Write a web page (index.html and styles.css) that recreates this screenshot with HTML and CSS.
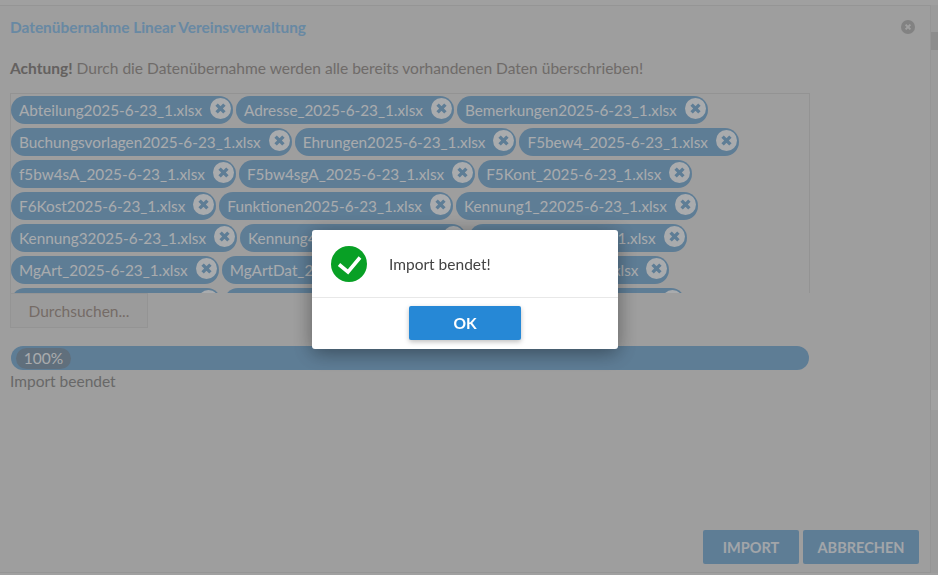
FILE: index.html
```html
<!DOCTYPE html>
<html lang="de">
<head>
    <meta charset="UTF-8">
    <meta name="viewport" content="width=device-width, initial-scale=1.0">
    <title>Datenübernahme</title>
    <link rel="stylesheet" href="styles.css">
</head>
<body>
    <div class="window">
        <div class="window-head">
            <h1>Datenübernahme Linear Vereinsverwaltung</h1>
            <span class="close-icon">
                <svg viewBox="0 0 14 14" width="14" height="14"><circle cx="7" cy="7" r="7" fill="currentColor"/><path d="M4.6 4.6l4.8 4.8M9.4 4.6l-4.8 4.8" stroke="#e6e6e6" stroke-width="2" fill="none"/></svg>
            </span>
        </div>
        <p class="warning"><b>Achtung!</b> Durch die Datenübernahme werden alle bereits vorhandenen Daten überschrieben!</p>

        <div class="file-list">
            <div class="file-row">
                <span class="chip">Abteilung2025-6-23_1.xlsx<i class="chip-x"><svg viewBox="0 0 10 10"><path d="M2 2l6 6M8 2l-6 6"/></svg></i></span>
                <span class="chip">Adresse_2025-6-23_1.xlsx<i class="chip-x"><svg viewBox="0 0 10 10"><path d="M2 2l6 6M8 2l-6 6"/></svg></i></span>
                <span class="chip">Bemerkungen2025-6-23_1.xlsx<i class="chip-x"><svg viewBox="0 0 10 10"><path d="M2 2l6 6M8 2l-6 6"/></svg></i></span>
            </div>
            <div class="file-row">
                <span class="chip">Buchungsvorlagen2025-6-23_1.xlsx<i class="chip-x"><svg viewBox="0 0 10 10"><path d="M2 2l6 6M8 2l-6 6"/></svg></i></span>
                <span class="chip">Ehrungen2025-6-23_1.xlsx<i class="chip-x"><svg viewBox="0 0 10 10"><path d="M2 2l6 6M8 2l-6 6"/></svg></i></span>
                <span class="chip">F5bew4_2025-6-23_1.xlsx<i class="chip-x"><svg viewBox="0 0 10 10"><path d="M2 2l6 6M8 2l-6 6"/></svg></i></span>
            </div>
            <div class="file-row">
                <span class="chip">f5bw4sA_2025-6-23_1.xlsx<i class="chip-x"><svg viewBox="0 0 10 10"><path d="M2 2l6 6M8 2l-6 6"/></svg></i></span>
                <span class="chip">F5bw4sgA_2025-6-23_1.xlsx<i class="chip-x"><svg viewBox="0 0 10 10"><path d="M2 2l6 6M8 2l-6 6"/></svg></i></span>
                <span class="chip">F5Kont_2025-6-23_1.xlsx<i class="chip-x"><svg viewBox="0 0 10 10"><path d="M2 2l6 6M8 2l-6 6"/></svg></i></span>
            </div>
            <div class="file-row">
                <span class="chip">F6Kost2025-6-23_1.xlsx<i class="chip-x"><svg viewBox="0 0 10 10"><path d="M2 2l6 6M8 2l-6 6"/></svg></i></span>
                <span class="chip">Funktionen2025-6-23_1.xlsx<i class="chip-x"><svg viewBox="0 0 10 10"><path d="M2 2l6 6M8 2l-6 6"/></svg></i></span>
                <span class="chip">Kennung1_22025-6-23_1.xlsx<i class="chip-x"><svg viewBox="0 0 10 10"><path d="M2 2l6 6M8 2l-6 6"/></svg></i></span>
            </div>
            <div class="file-row">
                <span class="chip">Kennung32025-6-23_1.xlsx<i class="chip-x"><svg viewBox="0 0 10 10"><path d="M2 2l6 6M8 2l-6 6"/></svg></i></span>
                <span class="chip">Kennung42025-6-23_1.xlsx<i class="chip-x"><svg viewBox="0 0 10 10"><path d="M2 2l6 6M8 2l-6 6"/></svg></i></span>
                <span class="chip">Kontakt_2025-6-23_1.xlsx<i class="chip-x"><svg viewBox="0 0 10 10"><path d="M2 2l6 6M8 2l-6 6"/></svg></i></span>
            </div>
            <div class="file-row">
                <span class="chip">MgArt_2025-6-23_1.xlsx<i class="chip-x"><svg viewBox="0 0 10 10"><path d="M2 2l6 6M8 2l-6 6"/></svg></i></span>
                <span class="chip">MgArtDat_2025-6-23_1.xlsx<i class="chip-x"><svg viewBox="0 0 10 10"><path d="M2 2l6 6M8 2l-6 6"/></svg></i></span>
                <span class="chip">Mitglied2025-6-23_1.xlsx<i class="chip-x"><svg viewBox="0 0 10 10"><path d="M2 2l6 6M8 2l-6 6"/></svg></i></span>
            </div>
            <div class="file-row">
                <span class="chip">MgKurs2025-6-23_1.xlsx<i class="chip-x"><svg viewBox="0 0 10 10"><path d="M2 2l6 6M8 2l-6 6"/></svg></i></span>
                <span class="chip">Mitgliedsdat2025-6-23_1.xlsx<i class="chip-x"><svg viewBox="0 0 10 10"><path d="M2 2l6 6M8 2l-6 6"/></svg></i></span>
                <span class="chip">Notizen_2025-6-23_1.xlsx<i class="chip-x"><svg viewBox="0 0 10 10"><path d="M2 2l6 6M8 2l-6 6"/></svg></i></span>
            </div>
        </div>

        <button type="button" class="browse-button">Durchsuchen...</button>

        <div class="progress">
            <span class="progress-label">100%</span>
        </div>
        <div class="status">Import beendet</div>

        <div class="window-foot">
            <button type="button" class="action-button">IMPORT</button>
            <button type="button" class="action-button">ABBRECHEN</button>
        </div>
    </div>
    <div class="scrollbar"><div class="scroll-thumb"></div><div class="scroll-thumb low"></div></div>

    <div class="overlay"></div>

    <div class="message-box">
        <div class="message-body">
            <svg class="ok-icon" viewBox="0 0 36 36" width="36" height="36"><circle cx="18" cy="18" r="18" fill="#08a025"/><path d="M8 18.5l9 7.5L29 11.5" stroke="#fff" stroke-width="3.6" fill="none"/></svg>
            <span>Import bendet!</span>
        </div>
        <div class="message-foot">
            <button type="button" class="ok-button">OK</button>
        </div>
    </div>
</body>
</html>
```

FILE: styles.css
```css
body {
    margin: 0;
    font-family: Lato, "Open Sans", Arial, sans-serif;
    font-size: 15.5px;
    background-color: #e6e6e6;
    color: #a09a97;
    overflow: hidden;
    display: flex;
    height: 575px;
    padding: 5px 0 2px;
    box-sizing: border-box;
}
.window {
    width: 931px;
    box-sizing: border-box;
    padding: 0 11px 0 10px;
    background-color: #e2e2e2;
    border: 1px solid #d6d6d6;
    border-left: none;
    display: flex;
    flex-direction: column;
}
.window-head {
    display: flex;
    justify-content: space-between;
    align-items: center;
    height: 42px;
    padding-right: 4px;
}
.window-head h1 {
    margin: 0;
    font-size: 15.4px;
    font-weight: bold;
    color: #96c4ea;
}
.close-icon {
    color: #bababa;
    display: flex;
}
.warning {
    margin: 10px 0 15px;
    height: 20px;
    line-height: 20px;
    font-size: 15.55px;
}
.warning b {
    color: #908c8a;
}
.file-list {
    width: 800px;
    height: 200px;
    flex-shrink: 0;
    overflow: hidden;
    box-sizing: border-box;
    border: 1px solid #d3d3d3;
    border-bottom: none;
    padding-top: 2px;
}
.file-row {
    display: flex;
    gap: 3px;
    margin-bottom: 4px;
}
.chip {
    display: flex;
    align-items: center;
    justify-content: space-between;
    height: 28px;
    padding: 0 1px 0 8px;
    gap: 8px;
    border-radius: 14px;
    background-color: #87b3d6;
    color: #f2f5f8;
    font-size: 15.3px;
    white-space: nowrap;
}
.chip-x {
    width: 21px;
    height: 21px;
    border-radius: 50%;
    background-color: #f2f5f8;
    margin-top: -3px;
    margin-right: 1px;
    display: flex;
    align-items: center;
    justify-content: center;
}
.chip-x svg {
    width: 13px;
    height: 13px;
}
.chip-x path {
    stroke: #87b3d6;
    stroke-width: 2.6;
    fill: none;
}
.browse-button {
    width: 138px;
    height: 35px;
    font: inherit;
    color: #a89a93;
    background-color: #dfdfdf;
    border: 1px solid #d4d4d4;
    flex-shrink: 0;
}
.progress {
    width: 798px;
    height: 24px;
    margin: 18px 0 0 1px;
    border-radius: 12px;
    background-color: #87b3d6;
    box-sizing: border-box;
    padding: 2px 5px;
}
.progress-label {
    display: block;
    width: 55px;
    height: 21px;
    line-height: 21px;
    border-radius: 11px;
    text-align: center;
    color: #f2f5f8;
    background-color: #8aa0b2;
}
.status {
    margin-top: 1px;
    line-height: 20px;
    color: #969696;
}
.window-foot {
    margin-top: auto;
    margin-bottom: 8px;
    display: flex;
    justify-content: flex-end;
    gap: 4px;
}
.action-button {
    height: 34px;
    padding: 0;
    width: 96px;
    font: inherit;
    font-size: 14.5px;
    font-weight: bold;
    color: #e8edf2;
    background-color: #87b3d6;
    border: none;
    border-radius: 2px;
}
.action-button + .action-button {
    width: 116px;
}
.scrollbar {
    flex: 1;
    position: relative;
    background-color: #dedede;
}
.scroll-thumb {
    position: absolute;
    top: 27px;
    left: 0;
    right: 0;
    height: 18px;
    background-color: #cacaca;
}
.scroll-thumb.low {
    top: 385px;
    height: 20px;
    background-color: #e8e8e8;
}
.overlay {
    position: fixed;
    top: 0;
    left: 0;
    right: 0;
    bottom: 0;
    background-color: rgba(0, 0, 0, 0.3);
}
.message-box {
    position: fixed;
    left: 312px;
    top: 230px;
    width: 306px;
    height: 119px;
    background-color: #fff;
    color: #444;
    border-radius: 3px;
    box-shadow: 0 4px 20px rgba(0, 0, 0, 0.4);
    display: flex;
    flex-direction: column;
}
.message-body {
    height: 67px;
    display: flex;
    align-items: center;
    padding-left: 19px;
    gap: 22px;
    border-bottom: 1px solid #e8e8e8;
}
.message-foot {
    flex: 1;
    display: flex;
    justify-content: center;
    padding-top: 8px;
}
.ok-button {
    width: 112px;
    height: 34px;
    font: inherit;
    font-weight: bold;
    color: #fff;
    background-color: #2688d6;
    border: none;
    border-radius: 2px;
    box-shadow: 0 2px 5px rgba(0, 0, 0, 0.25);
}
```
